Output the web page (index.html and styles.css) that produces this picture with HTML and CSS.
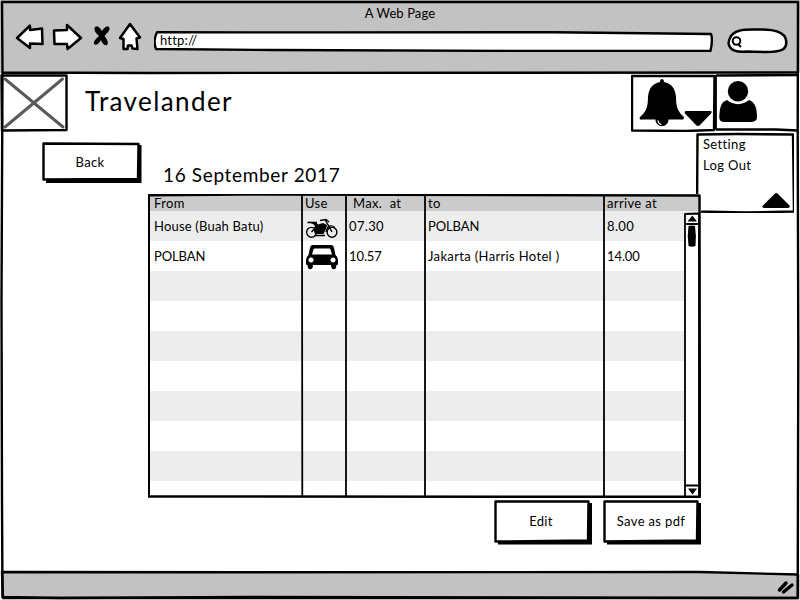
FILE: index.html
```html
<!DOCTYPE html>
<html lang="en">
<head>
<meta charset="utf-8">
<title>Travelander</title>
<link rel="stylesheet" href="styles.css">
</head>
<body>
<div class="window">
  <header class="chrome">
    <div class="window-title">A Web Page</div>
    <div class="toolbar">
      <svg class="nav-icons" width="128" height="30" viewBox="15 22 128 30">
        <path d="M17 38 L30 25.5 L30 30 L42 28.5 L42.500 44 L30 43.500 L30 48 Z"/>
        <path d="M54 30.500 L67 30 L67 25 L81 38 L67.500 49 L67 44 L54.500 44 Z"/>
        <path class="stop" d="M95 27 C98 25 100 28 102 31 C104 28 107 25 109 27 C111 30 107 33 104.500 36 C107 39 109 43 107 45 C104 46 102 43 101 40 C99 43 97 46 94 44 C93 41 97 38 99 36 C97 34 93 31 95 27 Z"/>
        <path d="M130 24 L140 37.500 L136.500 38.500 L137.500 49 L132.500 48.500 L131.500 45.500 L128 45.500 L127.500 49 L123.500 49 L123.500 39 L120 38 Z"/>
      </svg>
      <div class="address"><svg class="sketch" viewBox="0 0 560 22"><path fill="#fff" d="M3 2.300 L170 2.400 L400 2.200 L557 4 C559 9 558 14 556.500 21 L380 21 L120 20 L2 19 C0 14 .5 7 3 2.300 Z"/></svg><span>http://</span></div>
      <svg class="search" width="62" height="28" viewBox="726 27 62 28">
        <path fill="#fff" d="M730 38 C734 28 748 30 760 29.500 C775 29 785 33 786 40 C788 51 778 52 766 52 L746 51.500 C731 53 726 46 730 38 Z"/>
        <circle class="lens" cx="736.500" cy="41" r="3.800"/><path class="lens" d="M738 44 L741 47"/>
      </svg>
    </div>
  </header>

  <main>
    <div class="site-bar">
      <div class="logo"><svg class="sketch" viewBox="0 0 68 58"><path d="M1.500 1.500 L66.500 1.500 L66.500 56 L2 56.500 Z"/><path class="cross" d="M5 5 L63 53 M62.500 5 L5 53"/></svg></div>
      <h1>Travelander</h1>
      <button class="tile bell"><svg class="sketch" viewBox="631 74 84 58">
        <path d="M632 76 L714.500 76 L714 130 L686 131 L632 130.500 Z"/>
        <path class="solid" d="M660 82 C660 78 664 78 664 82 C672 84 675 88 676 97 C676 107 678 112 684 117 C684 119 683 120 681 119.500 L643 119.500 C640 120 639 119 640 117 C646 112 648 107 648 97 C649 88 652 84 660 82 Z M655.500 119 L668.500 119 C669 128.500 655 128.500 655.500 119 Z"/>
        <path class="glint" d="M658 120.500 Q658.500 124 661.500 124.500"/>
        <path class="solid" d="M685.500 111 L710.500 111 Q712.500 111.500 711 113.500 L700 125 Q698 127 696 125 L685 113.500 Q684 111.500 685.500 111 Z"/>
      </svg></button>
      <button class="tile user"><svg class="sketch" viewBox="715 74 84 58">
        <path d="M716 75.500 L798 75 M715.700 75 L715.700 130 M716 129.500 L776 129.500 L798 130.500"/>
        <circle class="solid" cx="738" cy="91.300" r="10.200"/>
        <path class="solid" d="M727 100 C733 105.500 743 105.500 749 100 C755 102 757 108 757 117 C757 121 754 122 750 122 L726 122 C721 122 719 121 719.300 116 C720 107 721 102 727 100 Z"/>
      </svg></button>
      <nav class="menu"><svg class="sketch" viewBox="0 0 98 81"><path fill="#fff" d="M1.500 2.500 L40 2 L97 2.500 L98 79.500 L50 80.500 L1 79.500 Z"/><path class="solid" d="M79 61.500 Q80 60.500 81.500 61.500 L93 73 Q95 75.500 92 76 L68 76 Q65 75.500 67.500 73 Z"/></svg>
        <a>Setting</a><a>Log Out</a></nav>
    </div>

    <div class="workspace">
      <aside><button class="btn back"><svg class="sketch" viewBox="0 0 100 41"><path class="shadow" d="M4 39 L97.500 39 L97.500 3"/><path fill="#fff" d="M1.500 1.500 L96.500 2 L96 37 L1.500 37.500 Z"/></svg><span>Back</span></button></aside>
      <section class="schedule">
        <h2>16 September 2017</h2>
        <div class="table">
          <div class="row head"><span>From</span><span>Use</span><span class="max">Max.&nbsp; at</span><span>to</span><span>arrive at</span></div>
          <div class="row"><span class="place">House (Buah Batu)</span><span><svg class="vehicle" width="34" height="22" viewBox="305 218 34 22">
            <g fill="none" stroke="#000" stroke-width="1.400"><circle cx="311.500" cy="232.300" r="4.900"/><circle cx="332" cy="232.300" r="4.900"/><path d="M311.500 232 L316 227 M325 219.500 L332 232 M320 220.500 L326 219.500 L329 222 M326 232 L328 227 Q331 224.500 335 227.500 M307.500 222.500 L317 222.500 M315 235.500 L325 235.500"/></g>
            <path d="M307.500 221.800 L316 222 L318 224.500 L323 223 L327 225 L326 229 L323.500 234 L315 234 L313.500 230 L315 226 L313 224 Z"/></svg></span><span>07.30</span><span class="caps">POLBAN</span><span>8.00</span></div>
          <div class="row"><span class="caps">POLBAN</span><span><svg class="vehicle car" width="34" height="26" viewBox="305 244 34 26">
            <path fill-rule="evenodd" d="M313 245 L331 245 Q333.500 245 334 248 L335.500 255 Q338 257 338 260 L338 264.500 L336.500 265 L336 268 Q333.500 270.500 331.500 268 L331 265 L313 265 L312.500 268 Q310 270.500 308 268 L307.500 265 L306 264.500 L306 260 Q306 257 308.500 255 L310 248 Q310.500 245 313 245 Z M314.500 248.500 Q313.500 248.500 313.300 250 L312 254.500 L332 254.500 L330.700 250 Q330.500 248.500 329.500 248.500 Z M311 257.500 a2.500 2.500 0 1 0 .1 0 Z M333 257.500 a2.500 2.500 0 1 0 .1 0 Z"/></svg></span><span class="tight">10.57</span><span>Jakarta (Harris Hotel )</span><span class="tight">14.00</span></div>
          <div class="row"></div><div class="row"></div><div class="row"></div><div class="row"></div><div class="row"></div><div class="row"></div><div class="row"></div><div class="row last"></div>
          <svg class="sketch" viewBox="148 194 553 304">
            <path fill="#fff" stroke="none" d="M685 213 H699 V496 H685 Z"/>
            <path d="M148.800 195.200 L245 194.600 L699.500 195.500 L700 496.800 L148.800 496.500 Z"/>
            <path class="rule" d="M302 195 L302.300 496 M346 195 V496 M425 195 V496 M604 195 L604 496"/>
            <path class="rule" d="M685 496 L685 214 L699 213.500 V496 M685 224 H699 M685 485.500 H699"/>
            <path class="solid" d="M687.500 221.500 L692.300 215.500 L697 221.500 Z M688 488.500 H697 L692.500 494.500 Z"/>
            <path class="solid" d="M688.500 226 Q692 225 695 226 Q696.500 236 695.500 246 Q692 247.500 688.500 246 Q687 236 688.500 226 Z"/>
          </svg>
        </div>
        <div class="actions">
          <button class="btn"><svg class="sketch" viewBox="0 0 98 45"><path class="shadow" d="M4 42.500 L96 42.500 L96 3"/><path fill="#fff" d="M1.500 1.500 L94.500 1.500 L94 40.500 L1.500 41.500 Z"/></svg><span class="edit">Edit</span></button>
          <button class="btn"><svg class="sketch" viewBox="0 0 98 45"><path class="shadow" d="M4 42.500 L96 42.500 L96 3"/><path fill="#fff" d="M1.500 1.500 L94.500 1.500 L94 40.500 L1.500 41.500 Z"/></svg><span class="save">Save as pdf</span></button>
        </div>
      </section>
    </div>
  </main>

  <footer></footer>
  <svg class="frame" viewBox="0 0 800 600">
    <path class="foot" d="M2 572 L250 572.300 L700 572 L798 574.500 L798 598 L3 598 Z"/>
    <path d="M2 2 L798 2 L797.700 130 L798.300 350 L797.700 598 L250 597 L60 598 L2.500 597 L2 500 L1.500 300 L2.500 72 Z M2 72.500 L150 73 L798 72.500"/>
    <path class="grip" d="M779.500 590 L786 583 M783.500 592 L792 585"/>
  </svg>
</div>
</body>
</html>
```
FILE: styles.css
```css
* { box-sizing: border-box; }
body { margin: 0; background: #fff; color: #000; font: 13px/16px Lato, "Open Sans", sans-serif; letter-spacing: .35px; }
h1, h2 { margin: 0; font-weight: 400; white-space: nowrap; }
button { border: 0; padding: 0; margin: 0; background: none; font: inherit; letter-spacing: inherit; color: inherit; }
svg { display: block; }

.window { position: relative; width: 800px; height: 600px; display: flex; flex-direction: column; overflow: hidden; }
.sketch, .frame { position: absolute; inset: 0; width: 100%; height: 100%; fill: none; stroke: #000; stroke-width: 2.4; stroke-linejoin: round; pointer-events: none; }
.sketch .solid { fill: #000; stroke: none; }

.chrome { height: 73px; padding: 5px 12px 0 15px; background: #c2c2c2; }
.window-title { height: 17px; padding-right: 3px; text-align: center; letter-spacing: .1px; }
.toolbar { display: flex; align-items: flex-start; }
.nav-icons, .search { flex: none; fill: #fff; stroke: #000; stroke-width: 2.5; stroke-linejoin: round; }
.nav-icons .stop { fill: #000; stroke: none; }
.address { position: relative; width: 560px; height: 22px; margin: 8px 0 0 11px; padding: 2px 0 0 6px; }
.address span { position: relative; letter-spacing: .2px; }
.search { margin: 5px 0 0 12px; }
.search .lens { fill: none; stroke-width: 2; }

main { flex: 1; display: flex; flex-direction: column; }
.site-bar { position: relative; height: 58px; margin-top: 1px; display: flex; }
.logo { position: relative; width: 68px; margin-right: 17px; height: 58px; }
.logo .cross { stroke: #5a5a5a; stroke-width: 3; stroke-linecap: round; }
h1 { flex: 1; font-size: 26px; line-height: 54px; letter-spacing: 1.4px; }
.tile { position: relative; width: 84px; height: 58px; }
.tile.user { margin-right: 1px; }
.sketch .glint { stroke: #fff; stroke-width: 1.2; }
.menu { position: absolute; right: 6px; top: 58px; width: 98px; height: 81px; padding: 4px 0 0 7px; display: flex; flex-direction: column; gap: 5px; }
.menu a { position: relative; }

.workspace { display: grid; grid-template-columns: 148px 553px; }
aside { padding: 10px 0 0 42px; }
.btn { position: relative; display: flex; align-items: center; justify-content: center; width: 98px; height: 45px; padding: 0 4px 3px 0; }
.btn span { position: relative; }
.btn .save { padding-left: 2px; }
.back { width: 100px; height: 41px; padding-bottom: 2px; }
.btn .shadow { stroke-width: 4; stroke-linejoin: miter; }
.schedule { padding-top: 31px; }
h2 { height: 31px; padding-left: 15px; font-size: 19px; line-height: 24px; letter-spacing: .65px; }
.table { position: relative; height: 304px; padding: 2px; overflow: hidden; background: #fff; }
.row { display: grid; grid-template-columns: 152px 44px 79px 179px 95px; height: 30px; line-height: 30px; white-space: pre; }
.row span { padding-left: 4px; }
.row:nth-child(even) { background: #ededed; }
.row.head { height: 15px; line-height: 15px; background: #cbcbcb; }
.row .place { letter-spacing: .2px; }
.row .tight { letter-spacing: -.1px; }
.row .caps { letter-spacing: -.1px; }
.row.head .max { padding-left: 7px; }
.row span + span { padding-left: 3px; }
.row .vehicle { margin: 7px 0 0; }
.row .vehicle.car { margin-top: 3px; }
.row.last { height: 14px; }
.rule { stroke-width: 1.8; }
.actions { display: flex; justify-content: flex-end; gap: 11px; padding: 2px 0 0; }

footer { height: 28px; }
.frame .foot { fill: #c2c2c2; }
.frame .grip { stroke-width: 3.5; stroke-linecap: round; }
```
